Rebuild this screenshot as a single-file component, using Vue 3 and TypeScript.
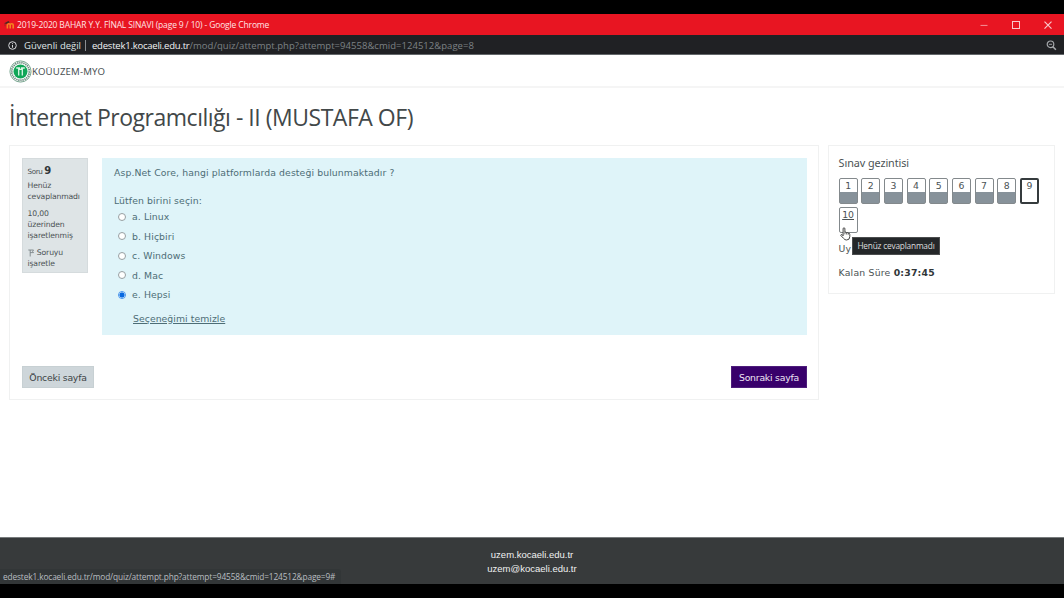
<script setup lang="ts">
interface Choice {
  letter: string
  label: string
  checked: boolean
}

interface NavItem {
  number: number
  state: 'answered' | 'current' | 'empty'
}

const choices: Choice[] = [
  { letter: 'a', label: 'Linux', checked: false },
  { letter: 'b', label: 'Hiçbiri', checked: false },
  { letter: 'c', label: 'Windows', checked: false },
  { letter: 'd', label: 'Mac', checked: false },
  { letter: 'e', label: 'Hepsi', checked: true },
]

const navItems: NavItem[] = Array.from({ length: 10 }, (_, i) => ({
  number: i + 1,
  state: i < 8 ? 'answered' : i === 8 ? 'current' : 'empty',
}))
</script>

<template>
  <div class="screen">
    <div class="titlebar">
      <svg class="moodle" width="11" height="10" viewBox="0 0 11 10">
        <path d="M3.4 8.4V5.1q0-1.4 1.4-1.4t1.4 1.4v3.3M6.2 8.4V5.1q0-1.4 1.5-1.4t1.5 1.4v3.3" fill="none" stroke="#f58220" stroke-width="1.6" />
        <path d="M0.3 3.2L4.4 1l1.4 1.2L2 4z" fill="#4a2a22" />
        <path d="M1 3.2v3" stroke="#8a2a22" stroke-width="0.7" />
      </svg>
      <span class="window-title">2019-2020 BAHAR Y.Y. FİNAL SINAVI (page 9 / 10) - Google Chrome</span>
      <svg class="window-controls" width="80" height="21" viewBox="0 0 80 21" fill="none" stroke="#f9c6ca" stroke-width="1">
        <path d="M4.5 11.4h7" stroke="#f4929a" />
        <rect x="36.5" y="7.5" width="7" height="7" />
        <path d="M68.5 7.6l7 7M75.5 7.6l-7 7" stroke-width="1.2" />
      </svg>
    </div>

    <div class="addressbar">
      <svg class="info-icon" width="9" height="9" viewBox="0 0 9 9">
        <circle cx="4.5" cy="4.5" r="3.8" fill="none" stroke="#d5d7da" stroke-width="1" />
        <path d="M4.5 4v2.7M4.5 2.2v1" stroke="#d5d7da" stroke-width="1" />
      </svg>
      <span class="insecure">Güvenli değil</span>
      <span class="divider"></span>
      <span class="host">edestek1.kocaeli.edu.tr</span><span class="path">/mod/quiz/attempt.php?attempt=94558&amp;cmid=124512&amp;page=8</span>
      <svg class="zoom-icon" width="11" height="11" viewBox="0 0 11 11" fill="none" stroke="#a5a8ab">
        <circle cx="4.5" cy="4.3" r="3.3" stroke-width="1.2" />
        <path d="M2.9 4.3h3.2" stroke-width="0.9" />
        <path d="M6.9 6.7l3 3" stroke-width="1.6" />
      </svg>
    </div>

    <header class="site-header">
      <svg class="logo" width="23" height="23" viewBox="0 0 23 23">
        <circle cx="11.5" cy="11.5" r="10.6" fill="#fff" stroke="#6f9f88" stroke-width="0.9" />
        <circle cx="11.5" cy="11.5" r="8.8" fill="none" stroke="#6d8d80" stroke-width="1.9" stroke-dasharray="1.3 0.8" />
        <circle cx="11.5" cy="11.5" r="7" fill="#0fa657" />
        <path d="M7.2 8h3.2v1.4h2.2V8h3.2M9.7 8.6v7M13.3 8.6v7" fill="none" stroke="#d9f6e5" stroke-width="1.3" />
      </svg>
      <span class="site-name">KOÜUZEM-MYO</span>
    </header>

    <h1 class="course-title"><span>İnternet Programcılığı - II (MUSTAFA OF)</span></h1>

    <div class="columns">
      <main class="quiz-panel">
        <div class="question-row">
          <aside class="question-info">
            <div class="question-no">Soru <b>9</b></div>
            <div class="info-block">Henüz<br />cevaplanmadı</div>
            <div class="info-block">10,00<br />üzerinden<br />işaretlenmiş</div>
            <div class="info-block flag">
              <svg width="6" height="8" viewBox="0 0 6 8" fill="none" stroke="#70787c" stroke-width="0.8">
                <path d="M0.3 1h5.2L4.6 2.4l.9 1.2H2.2M2.2 1v6.5" />
              </svg>
              Soruyu<br />işaretle
            </div>
          </aside>
          <section class="question-content">
            <p class="question-text">Asp.Net Core, hangi platformlarda desteği bulunmaktadır ?</p>
            <p class="prompt">Lütfen birini seçin:</p>
            <div v-for="choice in choices" :key="choice.letter" class="choice">
              <span class="radio" :class="{ checked: choice.checked }"></span>
              <span>{{ choice.letter }}. {{ choice.label }}</span>
            </div>
            <a class="clear-choice">Seçeneğimi temizle</a>
          </section>
        </div>
        <div class="actions">
          <button class="btn previous">Önceki sayfa</button>
          <button class="btn next">Sonraki sayfa</button>
        </div>
      </main>

      <aside class="nav-panel">
        <h2>Sınav gezintisi</h2>
        <div class="nav-grid">
          <a v-for="item in navItems" :key="item.number" class="nav-item" :class="item.state">{{ item.number }}</a>
        </div>
        <div class="finish">Uy</div>
        <div class="timer">Kalan Süre <b>0:37:45</b></div>
        <div class="tooltip">Henüz cevaplanmadı</div>
        <svg class="cursor" width="12" height="14" viewBox="0 0 12 14">
          <path d="M3.1 8V1.8q0-1 .9-1t.9 1v3.4q1.3-.5 1.7.5 1.2-.5 1.6.5 1.6-.3 1.6 1.2v2.2q0 3.4-3.2 3.4-2 0-3-1.6L.9 8.6q-.3-.9.6-1.1.8 0 1.6 1.3z" fill="#fff" stroke="#333" stroke-width="0.9" />
          <path d="M4.9 5.2v2.2M6.6 5.7v1.8M8.2 6.2v1.6" stroke="#333" stroke-width="0.7" />
        </svg>
      </aside>
    </div>

    <footer class="site-footer">
      <div class="footer-site">uzem.kocaeli.edu.tr</div>
      <div class="footer-mail">uzem@kocaeli.edu.tr</div>
      <div class="status"><span>edestek1.kocaeli.edu.tr/mod/quiz/attempt.php?attempt=94558&amp;cmid=124512&amp;page=9#</span></div>
    </footer>
  </div>
</template>

<style>
body {
  margin: 0;
  background: #000;
}
</style>

<style scoped>
* {
  box-sizing: border-box;
}

.screen {
  width: 1064px;
  height: 598px;
  padding: 14px 0;
  display: flex;
  flex-direction: column;
  overflow: hidden;
  background: linear-gradient(#000 14px, #fff 14px, #fff 584px, #000 584px);
  font-family: "DejaVu Sans", Verdana, sans-serif;
  font-size: 9.3px;
  color: #4b5254;
  white-space: nowrap;
}

.titlebar {
  flex: none;
  height: 21px;
  display: flex;
  align-items: center;
  padding-left: 4px;
  background: #e81522;
  color: #ffe4e5;
  font-family: "Open Sans", sans-serif;
}

.moodle {
  margin-right: 2px;
}

.window-title {
  font-size: 8.5px;
  letter-spacing: -0.145px;
}

.window-controls {
  margin-left: auto;
  margin-right: 8px;
}

.addressbar {
  flex: none;
  height: 20px;
  display: flex;
  align-items: center;
  padding: 1px 0 0 8px;
  background: #202124;
  border-bottom: 1px solid #63676a;
  font-family: "Open Sans", sans-serif;
  font-size: 9.5px;
  color: #dfe1e3;
}

.insecure {
  margin-left: 7px;
  width: 61px;
}

.divider {
  width: 1px;
  height: 11px;
  margin-right: 6px;
  background: #8c8f92;
}

.host {
  color: #f2f3f4;
  letter-spacing: -0.22px;
}

.path {
  color: #7d8185;
  letter-spacing: 0.035px;
}

.zoom-icon {
  margin-left: auto;
  margin-right: 7px;
}

.site-header {
  flex: none;
  height: 33px;
  display: flex;
  align-items: center;
  padding: 1px 0 0 9px;
  border-bottom: 2px solid #f5f5f5;
}

.site-name {
  font-family: "Noto Sans", sans-serif;
  font-size: 9.6px;
  letter-spacing: 0.17px;
}

.course-title {
  flex: none;
  height: 57px;
  margin: 0;
  padding: 12px 0 0 9px;
  font-family: "Open Sans", sans-serif;
  font-size: 23px;
  font-weight: 400;
  letter-spacing: -0.48px;
  line-height: 34px;
  color: #424849;
}

.columns {
  flex: none;
  display: flex;
  align-items: flex-start;
  gap: 9px;
  padding-left: 9px;
}

.quiz-panel {
  width: 810px;
  height: 255px;
  padding: 12px 11px 0 12px;
  border: 1px solid #f0f1f1;
}

.question-row {
  display: flex;
  gap: 14px;
}

.question-info {
  width: 66px;
  height: 115px;
  padding: 5px 0 0 4.5px;
  border: 1px solid #d5dbdd;
  background: #dee4e6;
  font-size: 7.7px;
  letter-spacing: -0.14px;
  line-height: 11px;
}

.question-no {
  height: 15px;
  line-height: 13px;
  margin-bottom: 1px;
  font-size: 7.2px;
  letter-spacing: -0.4px;
}

.question-no b {
  font-size: 10px;
  color: #303638;
}

.info-block {
  margin-bottom: 6px;
}

.flag svg {
  margin-right: 1px;
  vertical-align: -1.5px;
}

.question-content {
  width: 705px;
  height: 177px;
  padding: 8px 12px;
  background: #dff4f9;
  color: #4d6d76;
  letter-spacing: 0.1px;
}

.question-text,
.prompt {
  margin: 0;
  line-height: 14px;
}

.prompt {
  margin-top: 14px;
  margin-bottom: -1px;
}

.choice {
  height: 19.5px;
  display: flex;
  align-items: center;
  padding-left: 4px;
}

.radio {
  width: 8px;
  height: 8px;
  margin-right: 6px;
  border: 1px solid #979fa2;
  border-radius: 50%;
  background: #fff;
}

.radio.checked {
  border-color: #4592ec;
  background: radial-gradient(circle, #0869e0 0 2.3px, #e4f3ff 2.8px);
}

.clear-choice {
  display: block;
  width: fit-content;
  margin: 7px 0 0 19px;
  line-height: 14px;
  letter-spacing: 0.05px;
  text-decoration: underline;
}

.actions {
  display: flex;
  justify-content: space-between;
  margin-top: 31px;
}

.btn {
  height: 22px;
  padding: 0;
  border: 1px solid #c7d0d3;
  border-radius: 0;
  font: inherit;
  letter-spacing: -0.22px;
  color: #3d4447;
  background: #ced6da;
}

.previous {
  width: 72px;
}

.next {
  width: 76px;
  border-color: #4d1d7b;
  background: #38006b;
  color: #eee6f5;
}

.nav-panel {
  position: relative;
  width: 227px;
  height: 149px;
  padding: 10px 0 0 9.6px;
  border: 1px solid #f0f1f1;
}

.nav-panel h2 {
  margin: 0 0 8px;
  font-family: "Noto Sans", sans-serif;
  font-size: 10.8px;
  font-weight: 400;
  letter-spacing: -0.07px;
  line-height: 14px;
}

.nav-grid {
  display: flex;
  flex-wrap: wrap;
  gap: 3px 3.67px;
}

.nav-item {
  width: 19px;
  height: 26px;
  border: 1px solid #83898c;
  border-radius: 2px;
  background: #fff;
  text-align: center;
  line-height: 13px;
}

.nav-item.answered {
  background: linear-gradient(#fff 13px, #87929a 13px);
}

.nav-item.current {
  border: 2px solid #353b3d;
  line-height: 11px;
}

.nav-item.empty {
  text-decoration: underline;
}

.finish {
  margin-top: 9px;
  line-height: 13px;
}

.timer {
  margin-top: 11px;
  line-height: 13px;
  letter-spacing: 0.2px;
}

.timer b {
  color: #303638;
}

.tooltip {
  position: absolute;
  left: 23px;
  top: 91px;
  width: 88px;
  height: 18px;
  border: 1px solid #4b4d4e;
  background: #242729;
  color: #dcdddd;
  font-family: "Open Sans", sans-serif;
  font-size: 8.3px;
  letter-spacing: -0.2px;
  line-height: 16px;
  text-align: center;
}

.cursor {
  position: absolute;
  left: 11px;
  top: 81px;
}

.site-footer {
  position: relative;
  flex: none;
  height: 47px;
  margin-top: auto;
  padding-top: 10px;
  border-top: 1px solid #777b7c;
  background: #373a3b;
  color: #f0f1f1;
  font-family: "Liberation Sans", Arial, sans-serif;
  font-size: 9.5px;
  line-height: 14px;
  text-align: center;
}

.status {
  position: absolute;
  left: 0;
  bottom: 0;
  width: 341px;
  height: 15px;
  padding-left: 3px;
  border-radius: 0 3px 0 0;
  background: #323637;
  color: #b9bec1;
  font-family: "Open Sans", sans-serif;
  font-size: 8.3px;
  letter-spacing: -0.12px;
  line-height: 15px;
  text-align: left;
}
</style>
